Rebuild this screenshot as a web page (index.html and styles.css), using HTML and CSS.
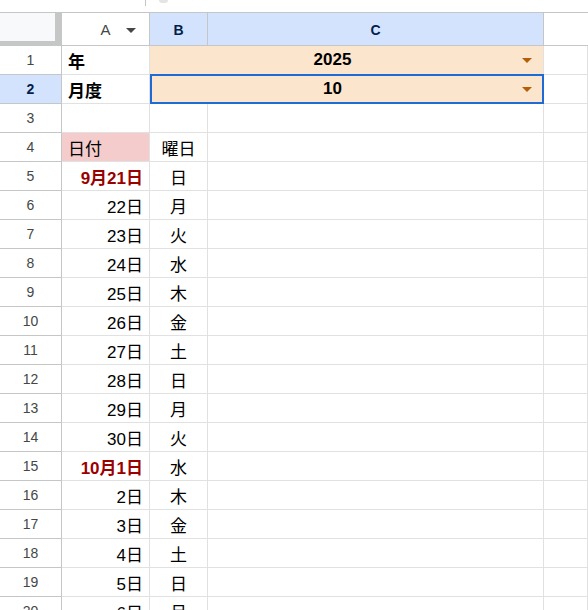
FILE: index.html
```html
<!DOCTYPE html>
<html lang="ja">
<head>
<meta charset="utf-8">
<title>カレンダー</title>
<link rel="stylesheet" href="styles.css">
</head>
<body>
<div class="toolbar">
  <span class="toolbar-gap"></span>
  <span class="toolbar-divider"></span>
  <span class="toolbar-mark"></span>
</div>
<div class="sheet">
  <!-- column headers -->
  <div class="corner"></div>
  <div class="col-head col-a">A<span class="col-menu"></span></div>
  <div class="col-head selected">B</div>
  <div class="col-head selected">C</div>
  <div class="col-head blank"></div>

  <!-- 1 -->
  <div class="row-head">1</div>
  <div class="cell label">年</div>
  <div class="cell picker"><span class="picker-value">2025</span><span class="picker-arrow"></span></div>
  <div class="cell"></div>

  <!-- 2 -->
  <div class="row-head selected">2</div>
  <div class="cell label">月度</div>
  <div class="cell picker active"><span class="picker-value">10</span><span class="picker-arrow"></span></div>
  <div class="cell"></div>

  <!-- 3 -->
  <div class="row-head">3</div>
  <div class="cell"></div><div class="cell"></div><div class="cell"></div><div class="cell"></div>

  <!-- 4 -->
  <div class="row-head">4</div>
  <div class="cell heading">日付</div>
  <div class="cell day">曜日</div>
  <div class="cell"></div><div class="cell"></div>

  <div class="row-head">5</div>
  <div class="cell date month-start">9月21日</div><div class="cell day">日</div><div class="cell"></div><div class="cell"></div>
  <div class="row-head">6</div>
  <div class="cell date">22日</div><div class="cell day">月</div><div class="cell"></div><div class="cell"></div>
  <div class="row-head">7</div>
  <div class="cell date">23日</div><div class="cell day">火</div><div class="cell"></div><div class="cell"></div>
  <div class="row-head">8</div>
  <div class="cell date">24日</div><div class="cell day">水</div><div class="cell"></div><div class="cell"></div>
  <div class="row-head">9</div>
  <div class="cell date">25日</div><div class="cell day">木</div><div class="cell"></div><div class="cell"></div>
  <div class="row-head">10</div>
  <div class="cell date">26日</div><div class="cell day">金</div><div class="cell"></div><div class="cell"></div>
  <div class="row-head">11</div>
  <div class="cell date">27日</div><div class="cell day">土</div><div class="cell"></div><div class="cell"></div>
  <div class="row-head">12</div>
  <div class="cell date">28日</div><div class="cell day">日</div><div class="cell"></div><div class="cell"></div>
  <div class="row-head">13</div>
  <div class="cell date">29日</div><div class="cell day">月</div><div class="cell"></div><div class="cell"></div>
  <div class="row-head">14</div>
  <div class="cell date">30日</div><div class="cell day">火</div><div class="cell"></div><div class="cell"></div>
  <div class="row-head">15</div>
  <div class="cell date month-start">10月1日</div><div class="cell day">水</div><div class="cell"></div><div class="cell"></div>
  <div class="row-head">16</div>
  <div class="cell date">2日</div><div class="cell day">木</div><div class="cell"></div><div class="cell"></div>
  <div class="row-head">17</div>
  <div class="cell date">3日</div><div class="cell day">金</div><div class="cell"></div><div class="cell"></div>
  <div class="row-head">18</div>
  <div class="cell date">4日</div><div class="cell day">土</div><div class="cell"></div><div class="cell"></div>
  <div class="row-head">19</div>
  <div class="cell date">5日</div><div class="cell day">日</div><div class="cell"></div><div class="cell"></div>
  <div class="row-head">20</div>
  <div class="cell date">6日</div><div class="cell day">月</div><div class="cell"></div><div class="cell"></div>
</div>
</body>
</html>
```

FILE: styles.css
```css
* {
  box-sizing: border-box;
}

html, body {
  margin: 0;
  padding: 0;
  background: #ffffff;
  overflow: hidden;
}

body {
  width: 588px;
  height: 610px;
  font-family: "Liberation Sans", "Noto Sans CJK JP", sans-serif;
  color: #000000;
}

/* formula bar strip above the grid */
.toolbar {
  height: 12px;
  display: flex;
  align-items: flex-start;
  overflow: hidden;
}

.toolbar-gap {
  width: 145px;
}

.toolbar-divider {
  width: 1px;
  height: 6px;
  background: #c4c7c5;
}

.toolbar-mark {
  margin-left: 13px;
  width: 9px;
  height: 3px;
  border-radius: 0 0 3px 3px;
  background: #e4e4e4;
}

/* grid */
.sheet {
  display: grid;
  grid-template-columns: 62px 88px 58px 336px 44px;
  grid-template-rows: 33px repeat(20, 29px);
  border-top: 1px solid #c4c7c5;
}

.corner {
  background: #f8f9fa;
  border-right: 7px solid #c4c7c5;
  border-bottom: 5px solid #c4c7c5;
}

.col-head {
  position: relative;
  display: flex;
  align-items: center;
  justify-content: center;
  padding-top: 1px;
  font-size: 14px;
  color: #444746;
  background: #ffffff;
  border-right: 1px solid #c4c7c5;
  border-bottom: 1px solid #c4c7c5;
}

.col-head.selected {
  background: #d3e3fd;
  color: #041e49;
  font-weight: bold;
}

.col-head.blank {
  border-right: none;
}

.col-a {
  font-size: 15px;
}

.col-menu {
  position: absolute;
  right: 13px;
  top: 15px;
  width: 0;
  height: 0;
  border-left: 5.5px solid transparent;
  border-right: 5.5px solid transparent;
  border-top: 5px solid #444746;
}

.row-head {
  display: flex;
  align-items: center;
  justify-content: center;
  font-size: 14px;
  color: #444746;
  background: #ffffff;
  border-right: 1px solid #c4c7c5;
  border-bottom: 1px solid #c4c7c5;
}

.row-head.selected {
  background: #d3e3fd;
  color: #041e49;
  font-weight: bold;
}

.cell {
  display: flex;
  align-items: center;
  padding: 0 6px;
  font-size: 17px;
  white-space: nowrap;
  border-right: 1px solid #e1e1e1;
  border-bottom: 1px solid #e1e1e1;
}

.cell.label {
  font-weight: bold;
}

.cell.heading {
  background: #f4cccc;
}

.cell.date {
  justify-content: flex-end;
}

.cell.day {
  justify-content: center;
}

.cell.month-start {
  color: #990000;
  font-weight: bold;
}

/* merged B:C dropdown cells */
.picker {
  grid-column: span 2;
  position: relative;
  padding: 0 11px 0 0;
  background: #fce5cd;
  font-weight: bold;
}

.picker-value {
  flex: 1;
  text-align: center;
}

.picker-arrow {
  margin-left: 7px;
  width: 0;
  height: 0;
  border-left: 5px solid transparent;
  border-right: 5px solid transparent;
  border-top: 5px solid #b45f06;
}

.picker.active::after {
  content: "";
  position: absolute;
  left: 0;
  top: -1px;
  right: -1px;
  bottom: -1px;
  border: 2px solid #1f6bd6;
  pointer-events: none;
}
```
